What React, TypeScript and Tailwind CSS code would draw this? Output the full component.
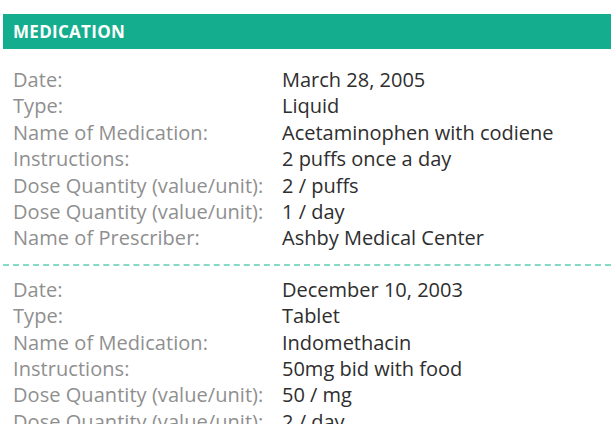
import React from "react";

type Row = { label: string; value: string };

const meds: Row[][] = [
  [
    { label: "Date:", value: "March 28, 2005" },
    { label: "Type:", value: "Liquid" },
    { label: "Name of Medication:", value: "Acetaminophen with codiene" },
    { label: "Instructions:", value: "2 puffs once a day" },
    { label: "Dose Quantity (value/unit):", value: "2 / puffs" },
    { label: "Dose Quantity (value/unit):", value: "1 / day" },
    { label: "Name of Prescriber:", value: "Ashby Medical Center" },
  ],
  [
    { label: "Date:", value: "December 10, 2003" },
    { label: "Type:", value: "Tablet" },
    { label: "Name of Medication:", value: "Indomethacin" },
    { label: "Instructions:", value: "50mg bid with food" },
    { label: "Dose Quantity (value/unit):", value: "50 / mg" },
    { label: "Dose Quantity (value/unit):", value: "2 / day" },
    { label: "Name of Prescriber:", value: "Ashby Medical Center" },
  ],
];

function MedGroup({ rows }: { rows: Row[] }) {
  return (
    <div className="flex flex-col">
      {rows.map((r, i) => (
        <div className="flex items-baseline text-[20px] leading-[26.4px]" key={i}>
          <span className="w-[269px] shrink-0 tracking-[0.05px] text-[#8f8f8f]">{r.label}</span>
          <span className="text-[#2e2e2e]">{r.value}</span>
        </div>
      ))}
    </div>
  );
}

export default function App() {
  return (
    <div className="h-[424px] w-[615px] overflow-hidden bg-white pt-[14px] pl-[3px] pr-[4px] font-['Open_Sans',sans-serif]">
      <div className="flex h-[35px] items-center bg-[#14ae8e] px-[10px]">
        <span className="text-[17px] font-bold tracking-[0.3px] text-white">MEDICATION</span>
      </div>
      <div className="pl-[10px] pt-[18px] pb-[12px]">
        <MedGroup rows={meds[0]} />
      </div>
      <div className="border-t-2 border-dashed border-[#86d9c6]" />
      <div className="pl-[10px] pt-[11px]">
        <MedGroup rows={meds[1]} />
      </div>
    </div>
  );
}
